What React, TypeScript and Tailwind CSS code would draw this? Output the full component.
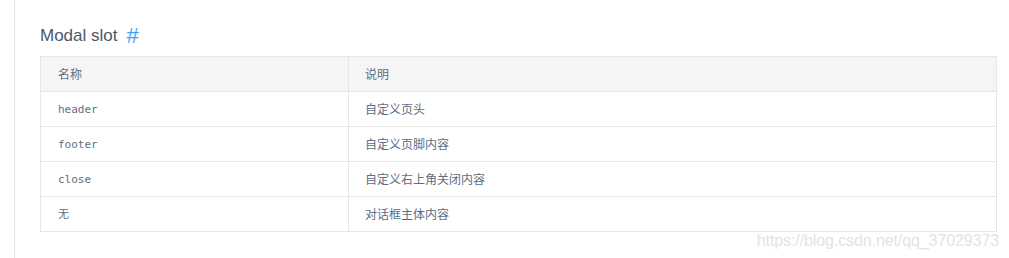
const rows = [
  { name: "header", desc: "自定义页头" },
  { name: "footer", desc: "自定义页脚内容" },
  { name: "close", desc: "自定义右上角关闭内容" },
  { name: "无", desc: "对话框主体内容" },
];

export default function App() {
  return (
    <div className="w-[1009px] h-[258px] bg-white overflow-hidden flex">
      <div className="w-[15px] shrink-0 border-r border-[#dfe4ec]" />
      <div className="flex-1 flex flex-col pl-[25px] pr-[10px] pt-[23px] relative">
        <h3
          className="h-[33px] flex items-start text-[17px] text-[#4b5769] leading-[26px]"
          style={{ fontFamily: '"Liberation Sans", Arial, sans-serif' }}
        >
          Modal slot
          <span className="ml-[9px] text-[22px] text-[#409eff] leading-[26px]">#</span>
        </h3>
        <table
          className="w-[957px] border-collapse text-[12px] text-[#5e6d82]"
          style={{ fontFamily: '"Noto Sans CJK SC", sans-serif' }}
        >
          <thead>
            <tr className="bg-[#f5f5f5] h-[35px]">
              <th className="w-[308px] border border-[#e6e6e6] pl-[17px] text-left font-normal">名称</th>
              <th className="border border-[#e6e6e6] pl-[16px] text-left font-normal">说明</th>
            </tr>
          </thead>
          <tbody>
            {rows.map((r) => (
              <tr key={r.name} className="h-[35px]">
                <td
                  className="border border-[#e6e6e6] pl-[17px]"
                  style={{ fontFamily: '"DejaVu Sans Mono", "Noto Sans CJK SC", monospace' }}
                >
                  <span className="text-[11px]">{r.name}</span>
                </td>
                <td className="border border-[#e6e6e6] pl-[16px]">{r.desc}</td>
              </tr>
            ))}
          </tbody>
        </table>
        <span
          className="absolute right-[10px] top-[229px] text-[16px] text-[#e3e3e3] tracking-[-0.1px]"
          style={{ fontFamily: '"Liberation Sans", Arial, sans-serif' }}
        >
          https://blog.csdn.net/qq_37029373
        </span>
      </div>
    </div>
  );
}
